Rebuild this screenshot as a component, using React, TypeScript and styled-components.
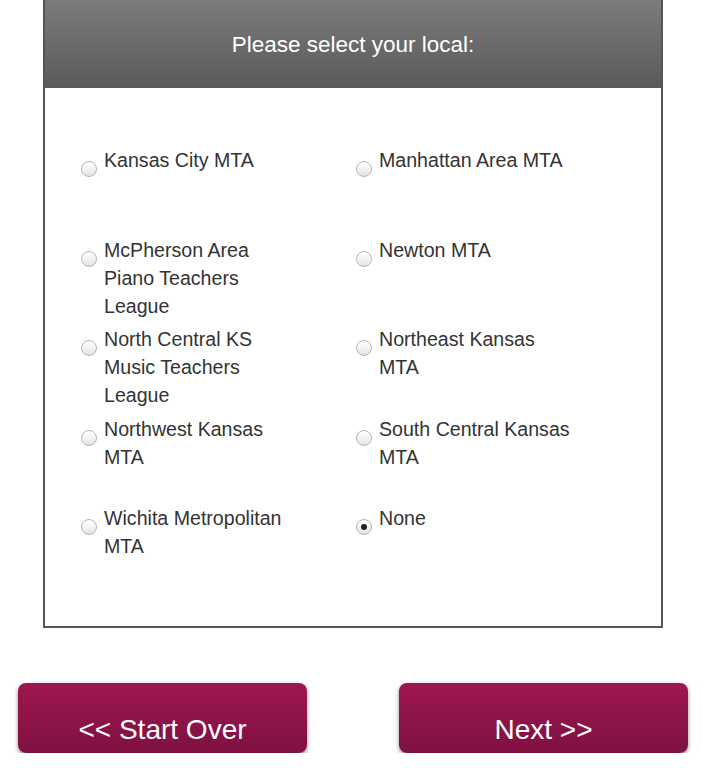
import React, { useState } from "react";
import styled, { createGlobalStyle } from "styled-components";

const Global = createGlobalStyle`
  html, body { margin: 0; padding: 0; background: #fff; }
  body { font-family: Arial, "Liberation Sans", sans-serif; }
`;

const Page = styled.div`
  width: 706px;
  display: flex;
  flex-direction: column;
  align-items: center;
`;

const Panel = styled.section`
  width: 620px;
  box-sizing: border-box;
  border: 2px solid #555;
  border-top: none;
  background: #fff;
`;

const Header = styled.h2`
  margin: 0;
  height: 88px;
  display: flex;
  align-items: center;
  justify-content: center;
  background: linear-gradient(to bottom, #7b7b7b 0%, #5a5a5a 100%);
  color: #fff;
  font-weight: normal;
  font-size: 22.5px;
  padding-top: 1px;
  box-sizing: border-box;
`;

const Options = styled.div`
  display: grid;
  grid-template-columns: 275px 275px;
  grid-auto-rows: 89.5px;
  padding: 58px 0 32px 36px;
`;

const Option = styled.label`
  display: flex;
  align-items: flex-start;
  gap: 7px;
  cursor: pointer;
`;

const Radio = styled.input.attrs({ type: "radio" })`
  appearance: none;
  -webkit-appearance: none;
  flex: none;
  margin: 15px 0 0 0;
  width: 16px;
  height: 16px;
  border-radius: 50%;
  border: 1px solid #b5b5b5;
  background: linear-gradient(to bottom, #ffffff 0%, #f0f0f0 60%, #e2e2e2 100%);
  box-sizing: border-box;
  display: grid;
  place-items: center;
  &:checked::after {
    content: "";
    width: 6px;
    height: 6px;
    border-radius: 50%;
    background: #222;
  }
`;

const LabelText = styled.span`
  max-width: 194px;
  font-size: 19.6px;
  line-height: 28px;
  color: #333;
`;

const Buttons = styled.div`
  width: 670px;
  display: flex;
  justify-content: space-between;
  margin-top: 55px;
`;

const NavButton = styled.button`
  width: 289px;
  height: 70px;
  border: none;
  border-radius: 8px;
  background: linear-gradient(to bottom, #9e1650 0%, #7f1141 100%);
  box-shadow: 0 2px 4px rgba(0, 0, 0, 0.45);
  color: #fff;
  font-family: Arial, "Liberation Sans", sans-serif;
  font-size: 28px;
  padding: 25px 0 0 0;
  box-sizing: border-box;
  cursor: pointer;
`;

const locals = [
  "Kansas City MTA",
  "Manhattan Area MTA",
  "McPherson Area Piano Teachers League",
  "Newton MTA",
  "North Central KS Music Teachers League",
  "Northeast Kansas MTA",
  "Northwest Kansas MTA",
  "South Central Kansas MTA",
  "Wichita Metropolitan MTA",
  "None",
];

export default function App() {
  const [selected, setSelected] = useState("None");
  return (
    <Page>
      <Global />
      <Panel>
        <Header>Please select your local:</Header>
        <Options>
          {locals.map((l) => (
            <Option key={l}>
              <Radio
                name="local"
                checked={selected === l}
                onChange={() => setSelected(l)}
              />
              <LabelText>{l}</LabelText>
            </Option>
          ))}
        </Options>
      </Panel>
      <Buttons>
        <NavButton>&lt;&lt; Start Over</NavButton>
        <NavButton>Next &gt;&gt;</NavButton>
      </Buttons>
    </Page>
  );
}
